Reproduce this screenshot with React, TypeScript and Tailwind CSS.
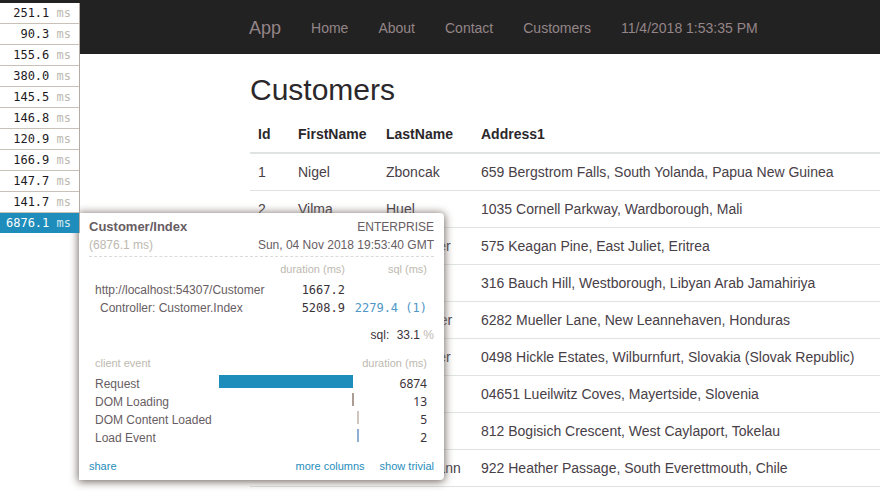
import React from "react";

const timings = [
  "251.1",
  "90.3",
  "155.6",
  "380.0",
  "145.5",
  "146.8",
  "120.9",
  "166.9",
  "147.7",
  "141.7",
  "6876.1",
];

const customers = [
  ["1", "Nigel", "Zboncak", "659 Bergstrom Falls, South Yolanda, Papua New Guinea"],
  ["2", "Vilma", "Huel", "1035 Cornell Parkway, Wardborough, Mali"],
  ["3", "Elsa", "Schroeder", "575 Keagan Pine, East Juliet, Eritrea"],
  ["4", "Owen", "Kuhn", "316 Bauch Hill, Westborough, Libyan Arab Jamahiriya"],
  ["5", "Marta", "Wintheiser", "6282 Mueller Lane, New Leannehaven, Honduras"],
  ["6", "Jonas", "Schroeder", "0498 Hickle Estates, Wilburnfurt, Slovakia (Slovak Republic)"],
  ["7", "Ida", "Ferry", "04651 Lueilwitz Coves, Mayertside, Slovenia"],
  ["8", "Carl", "Rau", "812 Bogisich Crescent, West Caylaport, Tokelau"],
  ["9", "Nora", "Stiedemann", "922 Heather Passage, South Everettmouth, Chile"],
];

const clientEvents = [
  { name: "Request", ms: "6874", bar: "w-[134px] bg-[#1f8dbb]" },
  { name: "DOM Loading", ms: "13", bar: "ml-[133px] w-[2px] bg-[#ab9d94]" },
  { name: "DOM Content Loaded", ms: "5", bar: "ml-[138px] w-[2px] bg-[#d0c6bf]" },
  { name: "Load Event", ms: "2", bar: "ml-[138px] w-[2px] bg-[#8fb0d3]" },
];

const mono = "font-['DejaVu_Sans_Mono',monospace]";

function NavBar() {
  return (
    <nav className="flex h-[54px] items-center gap-[30px] bg-[#222] pl-[249px] pt-[2px] text-sm text-[#948588]">
      <a href="#app" className="text-lg">App</a>
      <a href="#home">Home</a>
      <a href="#about">About</a>
      <a href="#contact">Contact</a>
      <a href="#customers">Customers</a>
      <span>11/4/2018 1:53:35 PM</span>
    </nav>
  );
}

function CustomerTable() {
  return (
    <table className="w-full table-fixed border-collapse text-left text-sm leading-5">
      <colgroup>
        <col className="w-[40px]" />
        <col className="w-[88px]" />
        <col className="w-[95px]" />
        <col />
      </colgroup>
      <thead>
        <tr className="h-[38px] border-b-2 border-[#dfe4e3] text-[#2b272b]">
          {["Id", "FirstName", "LastName", "Address1"].map((title) => (
            <th key={title} className="px-2 font-bold">{title}</th>
          ))}
        </tr>
      </thead>
      <tbody className="text-[#484047]">
        {customers.map((customer) => (
          <tr key={customer[0]} className="h-[37px] border-b border-[#dfe4e3]">
            {customer.map((value, i) => (
              <td key={i} className="px-2 whitespace-nowrap">{value}</td>
            ))}
          </tr>
        ))}
      </tbody>
    </table>
  );
}

function TimingList() {
  return (
    <ul className={`absolute top-[3px] left-0 w-20 border-r border-[#b5aaa5] bg-white text-xs ${mono}`}>
      {timings.map((time, i) => {
        const active = i === timings.length - 1;
        return (
          <li key={time} className={active ? "bg-[#1f8dbb] text-white" : "border-b border-[#c9c0b8] text-[#1c1a24]"}>
            <button type="button" className="block h-5 w-full pr-2 text-right">
              {time} <span className={active ? "text-[#d5e8f0]" : "text-[#bdb9b0]"}>ms</span>
            </button>
          </li>
        );
      })}
    </ul>
  );
}

function ProfilerPopup() {
  return (
    <section className="absolute top-[213px] left-[79px] w-[365px] rounded-r-sm bg-white px-[10px] pt-[5px] pb-[5px] text-xs leading-[18px] text-[#675d63] shadow-[0_1px_9px_1px_#776d66]">
      <header className="border-b border-dashed border-[#d8dcd9] pb-[2px]">
        <div className="flex justify-between">
          <h2 className="text-[13px] font-bold">Customer/Index</h2>
          <span>ENTERPRISE</span>
        </div>
        <div className="flex justify-between">
          <span className="text-[#bdb9b0]">(6876.1 ms)</span>
          <span>Sun, 04 Nov 2018 19:53:40 GMT</span>
        </div>
      </header>

      <table className="mt-[3px] w-full table-fixed">
        <colgroup>
          <col />
          <col className="w-[80px]" />
          <col className="w-[89px]" />
        </colgroup>
        <thead>
          <tr className="h-[21px] align-top text-[11px] text-[#bdb9b0]">
            <th></th>
            <th className="text-right font-normal">duration (ms)</th>
            <th className="pr-[7px] text-right font-normal">sql (ms)</th>
          </tr>
        </thead>
        <tbody>
          <tr>
            <td className="pl-[6px] whitespace-nowrap">http://localhost:54307/Customer</td>
            <td className={`text-right text-[#3a3238] ${mono}`}>1667.2</td>
            <td></td>
          </tr>
          <tr>
            <td className="pl-[11px] whitespace-nowrap">Controller: Customer.Index</td>
            <td className={`text-right text-[#3a3238] ${mono}`}>5208.9</td>
            <td className={`pr-[7px] text-right text-[#4f97c6] ${mono}`}>
              <a href="#queries">2279.4 (1)</a>
            </td>
          </tr>
        </tbody>
      </table>
      <p className="mt-[9px] text-right text-[#3a3238]">
        sql: <span className="ml-1">33.1</span> <span className="text-[#bdb9b0]">%</span>
      </p>

      <table className="mt-[10px] w-full table-fixed">
        <colgroup>
          <col className="w-[130px]" />
          <col />
          <col className="w-[75px]" />
        </colgroup>
        <thead>
          <tr className="h-[21px] align-top text-[11px] text-[#bdb9b0]">
            <th className="pl-[6px] text-left font-normal">client event</th>
            <th></th>
            <th className="pr-[7px] text-right font-normal">duration (ms)</th>
          </tr>
        </thead>
        <tbody>
          {clientEvents.map((event) => (
            <tr key={event.name}>
              <td className="pl-[6px] whitespace-nowrap">{event.name}</td>
              <td className="align-top">
                <div className={`h-[13px] ${event.bar}`} />
              </td>
              <td className="pr-[7px] text-right font-['Noto_Sans',sans-serif] text-[#3a3238]">{event.ms}</td>
            </tr>
          ))}
        </tbody>
      </table>

      <footer className="mt-[10px] flex gap-[15px] text-[11px] text-[#1f8dbb]">
        <a href="#share" className="mr-auto">share</a>
        <button type="button">more columns</button>
        <button type="button">show trivial</button>
      </footer>
    </section>
  );
}

export default function App() {
  return (
    <div className="relative min-h-screen overflow-hidden bg-white font-['Liberation_Sans',Arial,sans-serif]">
      <NavBar />
      <main className="pt-[19px] pl-[250px]">
        <h1 className="mb-[9px] text-[30px] leading-[33px] text-[#2b272b]">Customers</h1>
        <CustomerTable />
      </main>
      <ProfilerPopup />
      <TimingList />
    </div>
  );
}
